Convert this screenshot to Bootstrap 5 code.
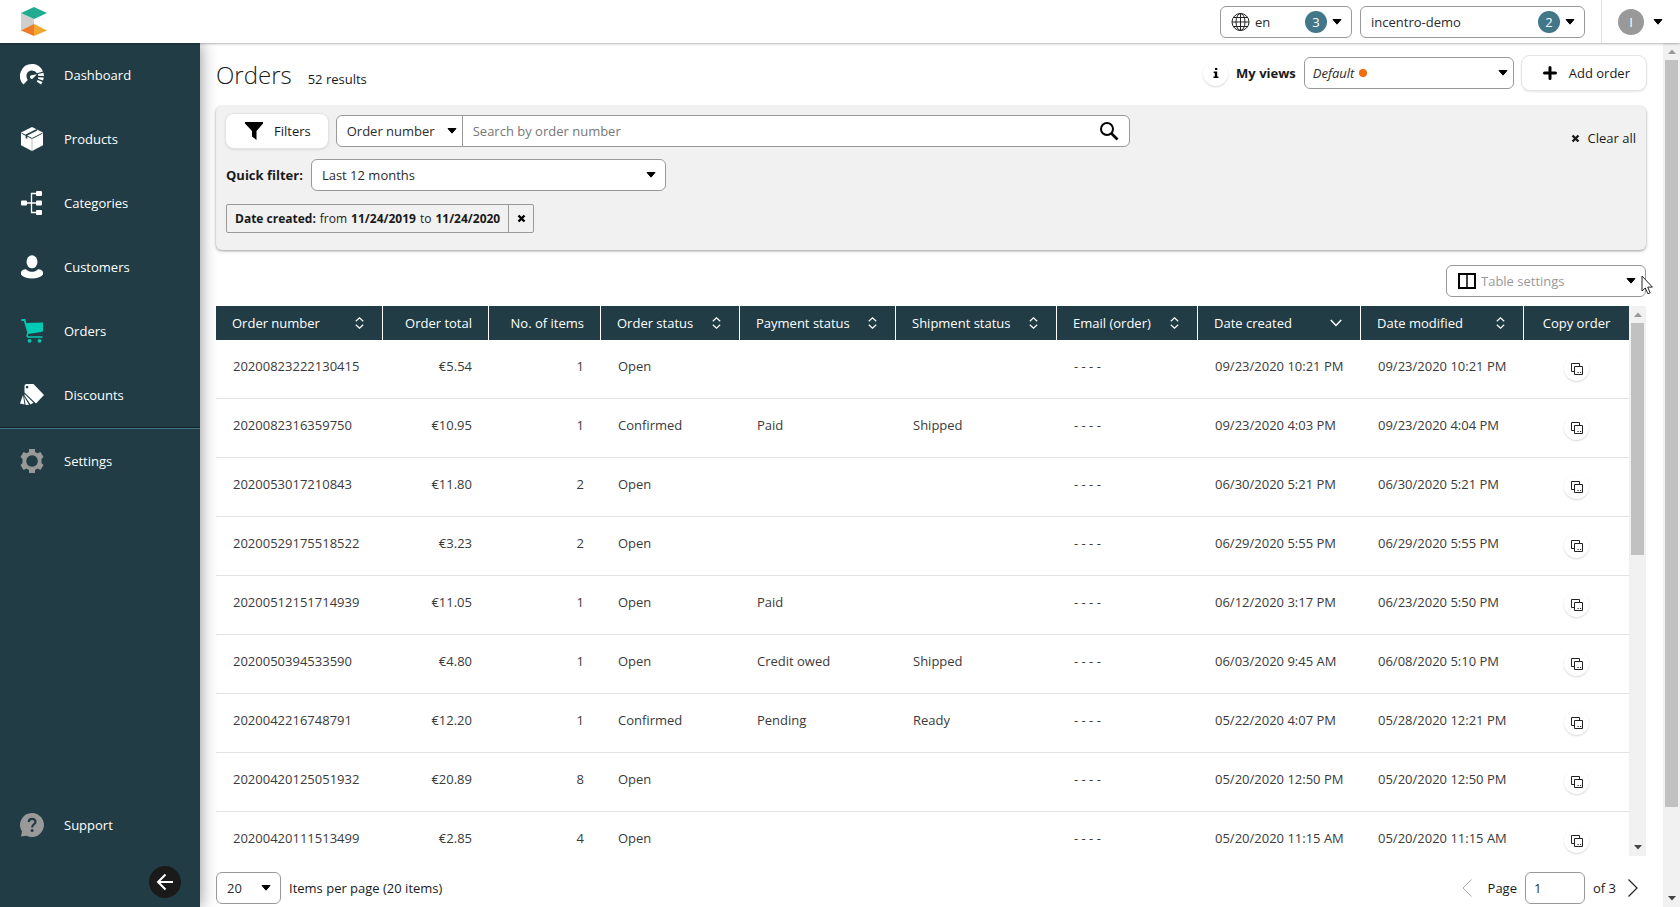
<!DOCTYPE html>
<html lang="en">
<head>
<meta charset="utf-8">
<meta name="viewport" content="width=device-width, initial-scale=1">
<title>Orders</title>
<link href="https://cdn.jsdelivr.net/npm/bootstrap@5.3.0/dist/css/bootstrap.min.css" rel="stylesheet">
<style>
  :root {
    --navy: #213c45;
    --teal: #417788;
    --line: #999;
    --bs-body-font-family: "Open Sans", sans-serif;
    --bs-body-font-size: 13px;
    --bs-body-line-height: 20px;
    --bs-body-color: #1a1a1a;
  }
  body { overflow: hidden; }
  svg { display: block; flex: none; }
  .plain-btn { border: 0; padding: 0; background: none; color: #1a1a1a; }

  .topbar { height: 44px; box-shadow: 0 0 3px rgba(0,0,0,.5); z-index: 3; padding-left: 20px; }
  .account { border-left: 1px solid #e3e3e3; padding: 0 17px 0 16px; gap: 9px; }
  .avatar { width: 26px; height: 26px; background: #999; color: #fff; }

  .sidebar { width: 200px; background: var(--navy); box-shadow: 0 0 16px rgba(0,0,0,.45); z-index: 2; }
  .side-link { height: 64px; padding-left: 20px; gap: 20px; color: #fff; text-decoration: none; }
  .side-link.active { color: #fff; }
  .side-link.active svg { color: #00c9b4; }
  .side-muted svg { color: #999; }
  .side-rule { border-top: 1px solid #111f24; border-bottom: 1px solid var(--teal); }
  .collapse-btn { width: 32px; height: 32px; margin: 9px 19px 9px auto; background: #1a1a1a; }

  .field, .field:focus { height: 32px; border: 1px solid var(--line); border-radius: 6px; padding: 0 10px; font-size: 13px; line-height: 20px; color: #2b2b2b; background-color: #fff; box-shadow: none; }
  select.field { padding-right: 24px; background-size: 10px 6px; background-position: right 9px center;
    background-image: url("data:image/svg+xml,%3Csvg xmlns='http://www.w3.org/2000/svg' viewBox='0 0 10 6'%3E%3Cpath d='M1 .5h8L5 5.2z' stroke='%23000' stroke-linejoin='round'/%3E%3C/svg%3E"); }
  .over { position: absolute; top: 50%; transform: translateY(-50%); pointer-events: none; }
  .count { right: 25px; width: 22px; height: 22px; background: var(--teal); color: #fff; }
  .w-lang { width: 132px; } .w-lang select { padding-left: 34px; }
  .w-project { width: 225px; }
  .w-view { width: 210px; } .w-view select { padding-left: 8px; font-style: italic; }
  .w-view select.field, .search select.field { background-position: right 5px center; }
  .w-quick { width: 355px; }
  .w-table { width: 200px; margin: 15px 0 9px; } .w-table select { padding-left: 34px; color: #999; }
  .w-size { width: 65px; }
  .w-page { width: 60px; } .w-page .field { padding-left: 8px; }
  .dot { width: 8px; height: 8px; background: #f16d0e; left: 55px; }

  .soft-btn { height: 34px; border: 0; border-radius: 8px; background: #fff; box-shadow: 0 0 0 1px #e4e4e4, 0 1px 3px rgba(0,0,0,.2); font-size: 13px; line-height: 20px; color: #1a1a1a; gap: 11px; padding: 0 17px 0 19px; }
  .add-btn { padding: 0 16px 0 21px; gap: 12px; }
  .round-btn { width: 25px; height: 25px; border: 0; padding: 0; background: #fff; border-radius: 50%; box-shadow: 0 1px 2px rgba(0,0,0,.16); }

  .main-area { padding: 0 17px 3px 16px; }
  .title-row { padding: 12px 0 15px; }
  .page-title { font-size: 24px; line-height: 32px; font-weight: 300; margin: 0; }
  .filters { background: #f1f1f1; border-radius: 6px; box-shadow: 0 1px 3px rgba(0,0,0,.4); padding: 8px 10px 17px; gap: 11px; }
  .search { width: 794px; }
  .search select.field { width: 127px; border-radius: 6px 0 0 6px; }
  .search input.field { margin-left: -1px; border-radius: 0 6px 6px 0; padding-left: 10px; }
  .search input::placeholder { color: #777; }
  .clear-btn { padding-top: 14px; }
  .tag { border: 1px solid var(--line); border-radius: 2px; height: 29px; font-size: 12px; margin-top: 2px; }
  .tag-x { width: 25px; border: 0; border-left: 1px solid var(--line); background: none; }

  .orders { table-layout: fixed; width: 100%; border-collapse: separate; border-spacing: 0; }
  .orders th { background: var(--navy); color: #fff; font-weight: 400; height: 34px; padding: 0 16px; border-right: 1px solid #fff; }
  .orders th:last-child { border-right: 0; padding: 0; }
  .orders td { height: 59px; vertical-align: top; padding: 16px 17px 0; border-bottom: 1px solid #e3e3e3; white-space: nowrap; color: #3a3a3a; }
  .orders td:last-child { padding: 16px 0 0; }
  .c1 { width: 167px; } .c2 { width: 106px; } .c3 { width: 112px; } .c4 { width: 139px; } .c5 { width: 156px; }
  .c6 { width: 161px; } .c7 { width: 141px; } .c8 { width: 163px; } .c9 { width: 163px; } .c10 { width: 105px; }
  .sort { display: flex; align-items: center; justify-content: space-between; width: 100%; padding: 0 2px 0 0; border: 0; background: none; color: #fff; }

  .bar { width: 17px; background: #f1f1f1; flex: none; }
  .bar-end { height: 17px; display: flex; align-items: center; justify-content: center; }
  .bar-thumb { background: #c1c1c1; margin: 0 2px; }
  .inner-thumb { height: 45%; }
  .outer-thumb { height: 90%; }
  .pointer { position: absolute; left: 195px; top: 10px; }
  .page-total { margin-right: 12px; }
</style>
</head>
<body class="vh-100 d-flex flex-column bg-white">

<svg class="d-none" aria-hidden="true">
  <symbol id="i-sort" viewBox="0 0 9 12"><path d="M.8 4.2 4.5.8l3.7 3.4M.8 7.8l3.7 3.4 3.7-3.4" fill="none" stroke="currentColor" stroke-width="1.2"/></symbol>
  <symbol id="i-copy" viewBox="0 0 12 12"><path d="M8.500 3V.5h-8v8H3" fill="none" stroke="#222"/><path d="M3.500 3.500h8v8h-8z" fill="#fff" stroke="#222"/><path d="M6.500 9.500h1.200M9 9.500h1.200" stroke="#222"/></symbol>
  <symbol id="i-x" viewBox="0 0 9 9"><path d="m1.500 1.500 6 6m0-6-6 6" stroke="currentColor" stroke-width="2.400"/></symbol>
  <symbol id="i-up" viewBox="0 0 8 5"><path d="M0 5h8L4 .5z" fill="#999"/></symbol>
  <symbol id="i-down" viewBox="0 0 8 5"><path d="M0 0h8L4 4.500z" fill="#444"/></symbol>
</svg>

<header class="topbar d-flex align-items-stretch position-relative bg-white">
  <a href="#" class="align-self-center" aria-label="Home">
    <svg width="28" height="30" viewBox="0 0 28 30"><path d="M1 6v18l13-6V12z" fill="#cfcfcf"/><path d="M14 0 1 6l13 6 13-6z" fill="#21ab91"/><path d="M14 17 1 23.500 14 29z" fill="#ee7b28"/><path d="m14 17 13 6.500L14 29z" fill="#f2a72e"/></svg>
  </a>
  <div class="ms-auto me-3 d-flex align-items-center gap-2">
    <div class="position-relative w-lang">
      <select class="form-select field" aria-label="Language"><option>en</option></select>
      <svg class="over" style="left:11px" width="19" height="19" viewBox="0 0 19 19" fill="none" stroke="#222"><circle cx="9.500" cy="9.500" r="8.500"/><ellipse cx="9.500" cy="9.500" rx="4.500" ry="8.500"/><path d="M9.500 1v17M1 9.500h17M2.500 5h14M2.500 14h14"/></svg>
      <span class="over count rounded-circle d-flex align-items-center justify-content-center">3</span>
    </div>
    <div class="position-relative w-project">
      <select class="form-select field" aria-label="Project"><option>incentro-demo</option></select>
      <span class="over count rounded-circle d-flex align-items-center justify-content-center">2</span>
    </div>
  </div>
  <button class="plain-btn account d-flex align-items-center" aria-label="Account">
    <span class="avatar rounded-circle d-flex align-items-center justify-content-center">I</span>
    <svg width="10" height="6" viewBox="0 0 10 6"><path d="M1 .5h8L5 5.200z" stroke="#000" stroke-linejoin="round"/></svg>
  </button>
</header>

<div class="d-flex flex-grow-1 overflow-hidden">
  <nav class="sidebar d-flex flex-column flex-shrink-0 position-relative">
    <a href="#" class="side-link d-flex align-items-center"><svg width="24" height="24" viewBox="0 0 24 24"><path d="M3.500 21.500A12 12 0 0 1 12 1c5 0 9 2.500 11 7.500l-6 1.700A6 6 0 0 0 12 7.500c-5 0-7 5-4.300 9.500z" fill="#fff"/><path d="m10.500 12.500 6.500-1.200-4.500 4.500a2 2 0 0 1-2-3.300zM18 11l5.500-1.300.5 3.300-6-.2zM18.200 14.200l5.600.3-.8 3-5-1.700zM17.700 17l4.800 2-1.500 2.500-4.300-3z" fill="#fff"/></svg>Dashboard</a>
    <a href="#" class="side-link d-flex align-items-center"><svg width="24" height="24" viewBox="0 0 24 24"><path d="M12 0 1 5.500v12.800L12 24l11-5.700V5.500z" fill="#fff"/><path d="M1.500 6.200 12 11.500l10.500-5.300" fill="none" stroke="#213c45"/><path d="M12 11.500V24" stroke="#b5bfc2"/><path d="m6.500 11.500-.1-3.500L17 2.700" fill="none" stroke="#213c45" stroke-width="1.600"/></svg>Products</a>
    <a href="#" class="side-link d-flex align-items-center"><svg width="24" height="24" viewBox="0 0 24 24"><path d="M17 2.500h-5.500v19H17M5 12h12" fill="none" stroke="#fff" stroke-width="1.300"/><g fill="#fff"><rect x="1" y="9.500" width="6" height="5" rx="1"/><rect x="16" width="6" height="5" rx="1"/><rect x="16" y="9.500" width="6" height="5" rx="1"/><rect x="16" y="19" width="6" height="5" rx="1"/></g></svg>Categories</a>
    <a href="#" class="side-link d-flex align-items-center"><svg width="24" height="24" viewBox="0 0 24 24" fill="#fff"><ellipse cx="12" cy="6.800" rx="5.500" ry="6.500"/><path d="M1 17.500c0-2 2-3 5-3.300 2 2 3.600 2.500 6 2.500s4-.5 6-2.500c3 .3 5 1.300 5 3.300v2c-2 2.500-6 4-11 4s-9-1.500-11-4z"/></svg>Customers</a>
    <a href="#" class="side-link active d-flex align-items-center" aria-current="page"><svg width="24" height="24" viewBox="0 0 24 24" fill="currentColor"><path d="M1.500 1h3l4 13.500" fill="none" stroke="currentColor" stroke-width="1.800"/><path d="M5.500 4 23 3.500V12l-1.500 1L8 15z"/><path d="M8 14.500c-1.500 2-1 3.500.5 3.500h14" fill="none" stroke="currentColor" stroke-width="1.500"/><circle cx="9.500" cy="21.800" r="1.900"/><circle cx="19.500" cy="21.800" r="1.900"/></svg>Orders</a>
    <a href="#" class="side-link d-flex align-items-center"><svg width="24" height="24" viewBox="0 0 24 24"><path fill="#fff" fill-rule="evenodd" d="M4.500 3q0-2 2-2h7L24 12l-8 8.500L4.500 9.500zM7 2.800a1.300 1.300 0 1 0 .1 0zM4.500 11l9 8.800-3 1.700L4.500 12.500zM4 13.500l5 8.300-3.300.2zM3 12l1.500 9.500L0 20.500z"/></svg>Discounts</a>
    <div class="side-rule"></div>
    <a href="#" class="side-link side-muted d-flex align-items-center"><svg width="24" height="24" viewBox="0 0 24 24"><path fill="currentColor" fill-rule="evenodd" d="M9 0h6v3l2.500 1.300L20.500 3l3 5-2 2v4l2 2-3 5-3-1.500L15 21v3H9v-3l-2.500-1.500-3 1.500-3-5 2-2v-4l-2-2 3-5 3 1.300L9 3zM12 6.200a5.800 5.800 0 1 0 .1 0z"/></svg>Settings</a>
    <a href="#" class="side-link side-muted d-flex align-items-center mt-auto"><svg width="24" height="24" viewBox="0 0 24 24"><path fill="currentColor" d="M12 0a12 12 0 1 1-5.500 22.700L1 23.500l1-5A12 12 0 0 1 12 0z"/><path d="M8.800 9c0-4 6.700-4 6.700-.3 0 2.600-3.400 2.600-3.400 5.800" fill="none" stroke="#213c45" stroke-width="2.200"/><circle cx="12.100" cy="17.500" r="1.500" fill="#213c45"/></svg>Support</a>
    <button class="collapse-btn rounded-circle border-0 p-0 d-flex align-items-center justify-content-center" aria-label="Collapse menu">
      <svg width="18" height="18" viewBox="0 0 18 18"><path d="M17 9H2m7.500-7.500L2 9l7.500 7.500" fill="none" stroke="#fff" stroke-width="2"/></svg>
    </button>
  </nav>

  <main class="main-area d-flex flex-column flex-grow-1 overflow-hidden">
    <div class="title-row d-flex align-items-center">
      <div class="d-flex align-items-center me-auto pt-1">
        <h1 class="page-title">Orders</h1>
        <span class="ms-3 pt-2">52 results</span>
      </div>
      <button class="round-btn d-flex align-items-center justify-content-center" aria-label="Information">
        <svg width="6" height="10" viewBox="0 0 6 10"><path d="M2 0h2.300v2H2zM.7 3.500h3.500V8.600h1.200V10H.5V8.600h1.300V4.900H.7z"/></svg>
      </button>
      <label class="fw-bold mx-2" for="view">My views</label>
      <div class="position-relative w-view">
        <select id="view" class="form-select field"><option>Default</option></select>
        <span class="over dot rounded-circle"></span>
      </div>
      <button class="soft-btn add-btn ms-2 d-flex align-items-center">
        <svg width="14" height="14" viewBox="0 0 14 14"><path d="M7 1.500v11M1.500 7h11" stroke="#000" stroke-width="3" stroke-linecap="round"/></svg>Add order
      </button>
    </div>

    <section class="filters d-flex flex-column flex-shrink-0">
      <div class="d-flex align-items-center">
        <button class="soft-btn me-2 d-flex align-items-center">
          <svg width="18" height="18" viewBox="0 0 18 18"><path d="M0 0h18v1.500L11.500 9v9L7 14.500V9L0 1.500z"/></svg>Filters
        </button>
        <div class="search d-flex position-relative">
          <select class="form-select field flex-shrink-0" aria-label="Search field"><option>Order number</option></select>
          <input class="form-control field" type="text" placeholder="Search by order number" aria-label="Search by order number">
          <svg class="over end-0 me-2" width="24" height="20" viewBox="0 0 24 20" fill="none" stroke="#000"><circle cx="9" cy="8" r="6" stroke-width="2"/><path d="m13.500 12.500 6 6" stroke-width="2.600"/></svg>
        </div>
        <button class="plain-btn clear-btn ms-auto d-flex align-items-center gap-2"><svg width="9" height="9"><use href="#i-x"/></svg>Clear all</button>
      </div>
      <div class="d-flex align-items-center">
        <label class="fw-bold me-2" for="quick">Quick filter:</label>
        <div class="w-quick"><select id="quick" class="form-select field"><option>Last 12 months</option></select></div>
      </div>
      <div class="tag d-flex align-self-start">
        <span class="px-2 d-flex align-items-center gap-1"><b>Date created:</b> from <b>11/24/2019</b> to <b>11/24/2020</b></span>
        <button class="tag-x d-flex align-items-center justify-content-center p-0" aria-label="Remove filter"><svg width="9" height="9"><use href="#i-x"/></svg></button>
      </div>
    </section>

    <div class="position-relative w-table ms-auto flex-shrink-0">
      <select class="form-select field" aria-label="Table settings"><option>Table settings</option></select>
      <svg class="over" style="left:12px" width="18" height="16" viewBox="0 0 18 16" fill="none" stroke="#000"><rect x="1" y="1" width="16" height="14" stroke-width="2"/><path d="M9 1v14" stroke-width="1.500"/></svg>
      <svg class="pointer" width="13" height="20" viewBox="0 0 13 20"><path d="M1 1v15l3.300-3 2.600 5.800 2.300-1-2.500-5.700h4.700z" fill="#fff" stroke="#222"/></svg>
    </div>

    <div class="d-flex flex-grow-1 overflow-hidden">
      <div class="flex-grow-1 overflow-hidden">
        <table class="orders">
          <colgroup><col class="c1"><col class="c2"><col class="c3"><col class="c4"><col class="c5"><col class="c6"><col class="c7"><col class="c8"><col class="c9"><col class="c10"></colgroup>
          <thead><tr>
            <th><button class="sort">Order number<svg width="9" height="12"><use href="#i-sort"/></svg></button></th>
            <th class="text-end">Order total</th>
            <th class="text-end">No. of items</th>
            <th><button class="sort">Order status<svg width="9" height="12"><use href="#i-sort"/></svg></button></th>
            <th><button class="sort">Payment status<svg width="9" height="12"><use href="#i-sort"/></svg></button></th>
            <th><button class="sort">Shipment status<svg width="9" height="12"><use href="#i-sort"/></svg></button></th>
            <th><button class="sort">Email (order)<svg width="9" height="12"><use href="#i-sort"/></svg></button></th>
            <th><button class="sort">Date created<svg width="12" height="8" viewBox="0 0 12 8"><path d="m.8 1 5.200 5.500L11.200 1" fill="none" stroke="#fff" stroke-width="1.500"/></svg></button></th>
            <th><button class="sort">Date modified<svg width="9" height="12"><use href="#i-sort"/></svg></button></th>
            <th class="text-center">Copy order</th>
          </tr></thead>
          <tbody>
            <tr><td>20200823222130415</td><td class="text-end">€5.54</td><td class="text-end">1</td><td>Open</td><td></td><td></td><td>- - - -</td><td>09/23/2020 10:21 PM</td><td>09/23/2020 10:21 PM</td><td><button class="round-btn mx-auto d-flex align-items-center justify-content-center" aria-label="Copy order"><svg width="12" height="12"><use href="#i-copy"/></svg></button></td></tr>
            <tr><td>2020082316359750</td><td class="text-end">€10.95</td><td class="text-end">1</td><td>Confirmed</td><td>Paid</td><td>Shipped</td><td>- - - -</td><td>09/23/2020 4:03 PM</td><td>09/23/2020 4:04 PM</td><td><button class="round-btn mx-auto d-flex align-items-center justify-content-center" aria-label="Copy order"><svg width="12" height="12"><use href="#i-copy"/></svg></button></td></tr>
            <tr><td>2020053017210843</td><td class="text-end">€11.80</td><td class="text-end">2</td><td>Open</td><td></td><td></td><td>- - - -</td><td>06/30/2020 5:21 PM</td><td>06/30/2020 5:21 PM</td><td><button class="round-btn mx-auto d-flex align-items-center justify-content-center" aria-label="Copy order"><svg width="12" height="12"><use href="#i-copy"/></svg></button></td></tr>
            <tr><td>20200529175518522</td><td class="text-end">€3.23</td><td class="text-end">2</td><td>Open</td><td></td><td></td><td>- - - -</td><td>06/29/2020 5:55 PM</td><td>06/29/2020 5:55 PM</td><td><button class="round-btn mx-auto d-flex align-items-center justify-content-center" aria-label="Copy order"><svg width="12" height="12"><use href="#i-copy"/></svg></button></td></tr>
            <tr><td>20200512151714939</td><td class="text-end">€11.05</td><td class="text-end">1</td><td>Open</td><td>Paid</td><td></td><td>- - - -</td><td>06/12/2020 3:17 PM</td><td>06/23/2020 5:50 PM</td><td><button class="round-btn mx-auto d-flex align-items-center justify-content-center" aria-label="Copy order"><svg width="12" height="12"><use href="#i-copy"/></svg></button></td></tr>
            <tr><td>2020050394533590</td><td class="text-end">€4.80</td><td class="text-end">1</td><td>Open</td><td>Credit owed</td><td>Shipped</td><td>- - - -</td><td>06/03/2020 9:45 AM</td><td>06/08/2020 5:10 PM</td><td><button class="round-btn mx-auto d-flex align-items-center justify-content-center" aria-label="Copy order"><svg width="12" height="12"><use href="#i-copy"/></svg></button></td></tr>
            <tr><td>2020042216748791</td><td class="text-end">€12.20</td><td class="text-end">1</td><td>Confirmed</td><td>Pending</td><td>Ready</td><td>- - - -</td><td>05/22/2020 4:07 PM</td><td>05/28/2020 12:21 PM</td><td><button class="round-btn mx-auto d-flex align-items-center justify-content-center" aria-label="Copy order"><svg width="12" height="12"><use href="#i-copy"/></svg></button></td></tr>
            <tr><td>20200420125051932</td><td class="text-end">€20.89</td><td class="text-end">8</td><td>Open</td><td></td><td></td><td>- - - -</td><td>05/20/2020 12:50 PM</td><td>05/20/2020 12:50 PM</td><td><button class="round-btn mx-auto d-flex align-items-center justify-content-center" aria-label="Copy order"><svg width="12" height="12"><use href="#i-copy"/></svg></button></td></tr>
            <tr><td>20200420111513499</td><td class="text-end">€2.85</td><td class="text-end">4</td><td>Open</td><td></td><td></td><td>- - - -</td><td>05/20/2020 11:15 AM</td><td>05/20/2020 11:15 AM</td><td><button class="round-btn mx-auto d-flex align-items-center justify-content-center" aria-label="Copy order"><svg width="12" height="12"><use href="#i-copy"/></svg></button></td></tr>
          </tbody>
        </table>
      </div>
      <div class="bar d-flex flex-column" aria-hidden="true">
        <div class="bar-end"><svg width="8" height="5"><use href="#i-up"/></svg></div>
        <div class="flex-grow-1"><div class="bar-thumb inner-thumb"></div></div>
        <div class="bar-end"><svg width="8" height="5"><use href="#i-down"/></svg></div>
      </div>
    </div>

    <div class="d-flex align-items-center pt-3 flex-shrink-0">
      <div class="w-size me-2"><select id="size" class="form-select field"><option>20</option></select></div>
      <label for="size">Items per page (20 items)</label>
      <button class="plain-btn ms-auto me-3" aria-label="Previous page"><svg width="10" height="18" viewBox="0 0 10 18"><path d="M9.500.5 1 9l8.500 8.500" fill="none" stroke="#aaa"/></svg></button>
      <label for="page">Page</label>
      <div class="w-page mx-2"><input id="page" class="form-control field" type="text" value="1"></div>
      <span class="page-total">of 3</span>
      <button class="plain-btn me-2" aria-label="Next page"><svg width="10" height="18" viewBox="0 0 10 18"><path d="M.5.5 9 9 .5 17.500" fill="none" stroke="#222" stroke-width="1.200"/></svg></button>
    </div>
  </main>

  <div class="bar d-flex flex-column" aria-hidden="true">
    <div class="bar-end"><svg width="8" height="5"><use href="#i-up"/></svg></div>
    <div class="flex-grow-1"><div class="bar-thumb outer-thumb"></div></div>
    <div class="bar-end"><svg width="8" height="5"><use href="#i-down"/></svg></div>
  </div>
</div>

<script src="https://cdn.jsdelivr.net/npm/bootstrap@5.3.0/dist/js/bootstrap.bundle.min.js"></script>
</body>
</html>
